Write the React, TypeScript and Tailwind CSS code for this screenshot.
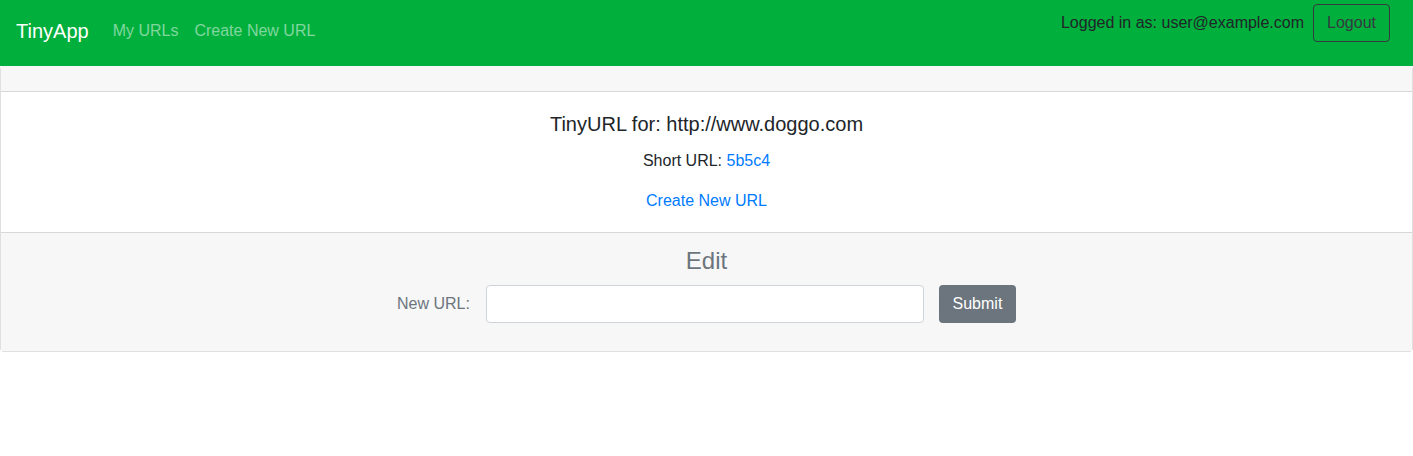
export default function App() {
  return (
    <div className="min-h-[456px] bg-white font-['Liberation_Sans',Arial,sans-serif] text-[#212529]">
      {/* Navbar */}
      <nav className="flex h-[66px] items-start justify-between bg-[#00af3c] px-4">
        <div className="flex h-[62px] items-center">
          <a href="#" className="mr-4 text-[20px] leading-[30px] text-white">
            TinyApp
          </a>
          <a href="#" className="px-2 text-[16px] leading-6 text-white/50">
            My URLs
          </a>
          <a href="#" className="px-2 text-[16px] leading-6 text-white/50">
            Create New URL
          </a>
        </div>
        <div className="flex h-[46px] items-center gap-[9px] pr-[7px]">
          <span className="text-[16px] leading-6 text-[#212529]">
            Logged in as: user@example.com
          </span>
          <button className="h-[38px] w-[77px] rounded-[4px] border border-[#343a40] text-[16px] leading-6 text-[#343a40]">
            Logout
          </button>
        </div>
      </nav>

      {/* Card */}
      <div className="rounded-[4px] border border-t-0 border-black/[0.125]">
        <div className="h-[26px] border-b border-black/[0.125] bg-[#f7f7f7]" />

        <div className="flex flex-col items-center px-5 pt-5 pb-[19px] text-center">
          <h5 className="mb-[13px] text-[20px] leading-[1.2]">
            TinyURL for: http://www.doggo.com
          </h5>
          <p className="mb-4 text-[16px] leading-6">
            Short URL: <a href="#" className="text-[#007bff]">5b5c4</a>
          </p>
          <a href="#" className="text-[16px] leading-6 text-[#007bff]">
            Create New URL
          </a>
        </div>

        <div className="flex h-[119px] flex-col items-center border-t border-black/[0.125] bg-[#f7f7f7] px-5 pt-[14px]">
          <h4 className="mb-[9px] text-[24px] leading-[1.2] text-[#6c757d]">Edit</h4>
          <form className="flex items-center gap-4">
            <label className="text-[16px] leading-6 text-[#6c757d]">New URL:</label>
            <input
              type="text"
              className="h-[38px] w-[438px] rounded-[4px] border border-[#ced4da] bg-white px-3 text-[16px]"
            />
            <button
              type="button"
              className="ml-[-1px] h-[38px] w-[77px] rounded-[4px] bg-[#6c757d] text-[16px] leading-6 text-white"
            >
              Submit
            </button>
          </form>
        </div>
      </div>
    </div>
  );
}
